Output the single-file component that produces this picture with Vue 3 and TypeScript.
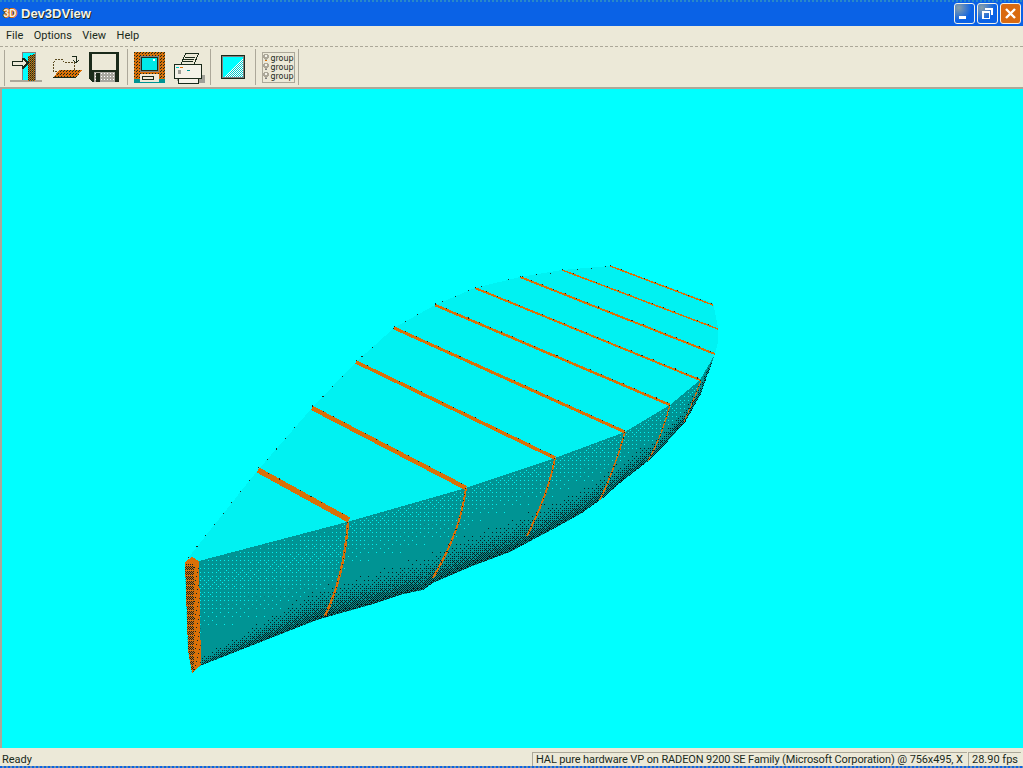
<script setup lang="ts">
type P = [number, number]
const topEdge: P[] = [[199,561],[347,522],[466,488],[555,458],[625,432],[670,405],[700,380],[715,354]]
const botEdge: P[] = [[200,666],[317,620],[370,605],[400,595],[423,590],[433,583],[470,567],[510,552],[557,527],[582,513],[603,498],[620,483],[647,462],[667,442],[685,422],[700,395],[715,354]]
const bayer = [
  [0,32,8,40,2,34,10,42],[48,16,56,24,50,18,58,26],[12,44,4,36,14,46,6,38],[60,28,52,20,62,30,54,22],
  [3,35,11,43,1,33,9,41],[51,19,59,27,49,17,57,25],[15,47,7,39,13,45,5,37],[63,31,55,23,61,29,53,21]
]
function at(line: P[], x: number): number {
  for (let i = 0; i < line.length - 1; i++) {
    const [a, b] = line[i], [c, d] = line[i + 1]
    if (x >= a && x <= c) return b + ((x - a) / (c - a)) * (d - b)
  }
  return line[line.length - 1][1]
}
function bandAt(x: number): number {
  if (x < 320) return 10 + (x - 200) * 0.22
  if (x < 500) return 36
  return Math.max(14, 36 - (x - 500) * 0.1)
}
let dark = ''
let light = ''
for (let x = 200; x < 714; x++) {
  const t = Math.ceil(at(topEdge, x)) + 1
  const b = Math.floor(at(botEdge, x))
  const reach = x < 340 ? 72 : x < 470 ? 45 : 36
  for (let y = t; y < b; y++) {
    const fromBottom = b - y
    const darkAmt = Math.max(0, 1 - fromBottom / bandAt(x))
    const th = bayer[y % 8][x % 8] / 64
    if (Math.pow(darkAmt, 2) * 0.7 > th + 0.004) {
      dark += `M${x} ${y}h1v1h-1z`
    } else {
      const depth = y - t
      const lightAmt = x < 340
        ? 0.085 * Math.max(0, 1 - Math.abs(depth - 24) / 48)
        : 0.09 * Math.max(0, 1 - depth / reach)
      if (lightAmt > th + 0.001) light += `M${x} ${y}h1v1h-1z`
    }
  }
}
let stern = ''
for (let y = 562; y < 672; y++) {
  for (let x = 185; x < 201; x++) {
    const on = x < 194 ? (x + y) % 2 === 0 && y % 5 !== 0 : (x * 3 + y * 5) % 17 === 0
    if (on) stern += `M${x} ${y}h1v1h-1z`
  }
}
const hullPoints = [...topEdge, ...[...botEdge].reverse()].map((p) => p.join(',')).join(' ')
const deckPoints =
  '199,561 188,558 258,470 312,408 356,362 394,328 435,305 475,288 520,277 562,270 610,266 713,303 718,327 718,342 715,354 700,380 670,405 625,432 555,458 466,488 347,522'
const deckFrames = [
  { d: 'M258 470L349 520', w: 5.5 },
  { d: 'M312 408L466 488', w: 4.5 },
  { d: 'M356 362L555 458', w: 3.5 },
  { d: 'M394 328L625 432', w: 3 },
  { d: 'M435 305L670 405', w: 2.5 },
  { d: 'M475 288L700 380', w: 2 },
  { d: 'M520 277L715 354', w: 2 },
  { d: 'M562 270L718 329', w: 1.5 },
  { d: 'M610 266L713 305', w: 1.5 }
]
const hullFrames = [
  { d: 'M348 522C346 550 340 585 325 616', w: 2.4 },
  { d: 'M466 488C462 515 455 540 433 578', w: 2 },
  { d: 'M555 458C552 475 545 500 527 536', w: 1.8 },
  { d: 'M625 432C620 450 612 475 600 500', w: 1.5 },
  { d: 'M670 405C666 420 660 440 648 461', w: 1.2 },
  { d: 'M701 380C696 395 690 408 684 422', w: 1 }
]
</script>

<template>
  <div class="window">
    <header class="titlebar">
      <span class="app-icon">3D</span>
      <span class="title">Dev3DView</span>
      <div class="caption-buttons">
        <button class="cap"><span class="min-glyph"></span></button>
        <button class="cap">
          <svg width="13" height="13" viewBox="0 0 13 13" shape-rendering="crispEdges">
            <path d="M4 1h8v7h-2V3H4z" fill="#fff" /><path d="M1 4h8v8H1zM2.500 6v4.500h5V6z" fill="#fff" fill-rule="evenodd" />
          </svg>
        </button>
        <button class="cap close">
          <svg width="13" height="13" viewBox="0 0 13 13"><path d="M2 2l9 9M11 2l-9 9" stroke="#fff" stroke-width="2.400" /></svg>
        </button>
      </div>
    </header>

    <nav class="menubar">
      <span>File</span><span>Options</span><span>View</span><span>Help</span>
    </nav>

    <div class="toolbar">
      <div class="tool door">
        <svg width="34" height="32" viewBox="0 0 34 32" shape-rendering="crispEdges">
          <defs>
            <pattern id="orangeDots" width="3" height="3" patternUnits="userSpaceOnUse">
              <rect width="3" height="3" fill="#d97008" /><rect width="1" height="1" fill="#1a2a1a" /><rect x="2" y="1" width="1" height="1" fill="#1a2a1a" />
            </pattern>
            <pattern id="mixDots" width="2" height="2" patternUnits="userSpaceOnUse">
              <rect width="2" height="2" fill="#d97008" /><rect width="1" height="1" fill="#1a2a1a" /><rect x="1" y="1" width="1" height="1" fill="#1a5a4a" />
            </pattern>
            <pattern id="cyanDots" width="2" height="2" patternUnits="userSpaceOnUse">
              <rect width="2" height="2" fill="#fff" /><rect width="1" height="1" fill="#00c8c8" /><rect x="1" y="1" width="1" height="1" fill="#00c8c8" />
            </pattern>
            <pattern id="greyDots" width="3" height="3" patternUnits="userSpaceOnUse">
              <rect width="3" height="3" fill="#a8a8a0" /><rect width="1" height="1" fill="#fff" />
            </pattern>
          </defs>
          <rect x="0" y="29" width="32" height="2" fill="#aca899" />
          <rect x="12" y="1" width="14" height="28" fill="#808080" />
          <rect x="13" y="2" width="12" height="27" fill="#00ffff" />
          <path d="M18 5l7-2v27h-7z" fill="url(#mixDots)" />
          <path d="M2 10h10V7h2l5 5-5 6h-2v-3H2z" fill="#1a2a1a" />
          <path d="M3 11h10V9l3 3-3 4v-2H3z" fill="#ece9d8" />
        </svg>
      </div>
      <div class="tool folder">
        <svg width="30" height="24" viewBox="0 0 30 24" shape-rendering="crispEdges">
          <path d="M1.500 7.500l2-3h7l2 3h10v9h-21z" fill="#ece9d8" stroke="#5a4a20" stroke-dasharray="2 1" />
          <path d="M7 15h23l-6 8H1z" fill="url(#orangeDots)" />
          <path d="M1 22h23v1H1z" fill="#1a2a1a" />
          <path d="M20 1h4v6M21 5l3 3 3-3" fill="none" stroke="#1a2a1a" />
        </svg>
      </div>
      <div class="tool floppy">
        <svg width="30" height="30" viewBox="0 0 30 30" shape-rendering="crispEdges">
          <path d="M0 0h30v30H4l-4-3z" fill="#1a2a1a" />
          <rect x="3" y="2" width="24" height="16" fill="#ece9d8" />
          <rect x="5" y="20" width="21" height="10" fill="url(#greyDots)" />
          <rect x="7" y="21" width="4" height="9" fill="#1a2a1a" />
        </svg>
      </div>
      <i class="sep sep-a"></i>
      <div class="tool computer">
        <svg width="31" height="31" viewBox="0 0 31 31" shape-rendering="crispEdges">
          <rect width="31" height="31" fill="url(#orangeDots)" />
          <rect y="27" width="31" height="4" fill="#009494" />
          <rect x="6" y="4" width="19" height="16" fill="#808080" />
          <rect x="7" y="5" width="17" height="14" fill="#1a2a1a" />
          <rect x="8" y="6" width="15" height="12" fill="#00e8e8" />
          <rect x="19" y="7" width="2" height="2" fill="#fff" />
          <rect x="6" y="22" width="19" height="8" fill="#ece9d8" />
          <rect x="8" y="24" width="12" height="4" fill="#1a2a1a" />
          <rect x="9" y="25" width="10" height="2" fill="#ece9d8" />
        </svg>
      </div>
      <div class="tool printer">
        <svg width="32" height="33" viewBox="0 0 32 33" shape-rendering="crispEdges">
          <path d="M3 24h29v8H5z" fill="#a0a098" />
          <path d="M8 13l5-11h13l-5 11z" fill="#ece9d8" stroke="#1a2a1a" />
          <path d="M12 6h10M11 8h10M10 10h10" stroke="#1a2a1a" />
          <rect x="1" y="13" width="27" height="14" fill="#f4f2e8" stroke="#1a2a1a" />
          <rect x="3" y="16" width="3" height="1" fill="#00c8c8" />
          <rect x="7" y="16" width="3" height="1" fill="#d97008" />
          <rect x="5" y="19" width="3" height="4" fill="#a0a098" />
          <rect x="14" y="19" width="3" height="1" fill="#009494" />
          <rect x="5" y="27" width="20" height="5" fill="#f4f2e8" stroke="#1a2a1a" />
        </svg>
      </div>
      <i class="sep sep-b"></i>
      <div class="tool colour">
        <svg width="24" height="24" viewBox="0 0 24 24" shape-rendering="crispEdges">
          <rect width="24" height="24" fill="#1a2a1a" />
          <rect x="1" y="1" width="22" height="22" fill="#808080" />
          <rect x="2" y="2" width="20" height="20" fill="#00ffff" />
          <path d="M22 3v19H3z" fill="url(#cyanDots)" />
        </svg>
      </div>
      <i class="sep sep-c"></i>
      <div class="tool groups">
        <div v-for="n in 3" :key="n" class="group-row">
          <svg width="6" height="8" viewBox="0 0 6 8" shape-rendering="crispEdges">
            <path d="M1 0h4v1h1v3H5v1H4v2H2V5H1V4H0V1h1z" fill="#aca899" />
            <path d="M2 1h2v2H2z" fill="#f4f2e8" />
            <path d="M2 6h2v1H2z" :fill="n === 1 ? '#d97008' : '#808080'" />
          </svg>
          <span>group</span>
        </div>
      </div>
      <i class="sep sep-d"></i>
    </div>

    <main class="viewport">
      <svg class="scene" width="1021" height="659" viewBox="2 89 1021 659" shape-rendering="crispEdges">
        <polygon :points="deckPoints" fill="#00f2f2" />
        <polygon :points="hullPoints" fill="#009494" />
        <path :d="light" fill="#00f0f0" />
        <path :d="dark" fill="#0a1e1e" />
        <path d="M188 558L258 470L312 408L356 362L394 328L435 305L475 288L520 277L610 266" fill="none" stroke="#1a2a1a" stroke-width="1" stroke-dasharray="1 13" />
        <path v-for="(f, i) in deckFrames" :key="i" :d="f.d" fill="none" stroke="#d97008" :stroke-width="f.w" />
        <path v-for="(f, i) in deckFrames" :key="'k' + i" :d="f.d" fill="none" stroke="#1a2a1a" stroke-width="1" stroke-dasharray="1 11" :transform="`translate(0,-${f.w / 2})`" />
        <path v-for="(f, i) in hullFrames" :key="'h' + i" :d="f.d" fill="none" stroke="#d97008" :stroke-width="f.w" />
        <path v-for="(f, i) in hullFrames" :key="'d' + i" :d="f.d" fill="none" stroke="#1a2a1a" stroke-width="1" stroke-dasharray="1 5" />
        <polygon points="185,562 192,557 199,561 201,665 192,673 188,650" fill="#d97008" />
        <clipPath id="sternClip"><polygon points="185,564 199,564 201,665 192,673 188,650" /></clipPath>
        <path :d="stern" fill="#0d2a2a" clip-path="url(#sternClip)" />
      </svg>
    </main>

    <footer class="statusbar">
      <span class="ready">Ready</span>
      <span class="panel info">HAL pure hardware VP on RADEON 9200 SE Family (Microsoft Corporation) @ 756x495, X</span>
      <span class="panel fps">28.90 fps</span>
    </footer>
  </div>
</template>

<style scoped>
.window {
  width: 1023px;
  height: 768px;
  display: flex;
  flex-direction: column;
  overflow: hidden;
  background: #ece9d8;
  font-family: Roboto, "Liberation Sans", sans-serif;
  font-size: 11px;
  color: #1a2a1a;
}
.titlebar {
  height: 26px;
  flex: none;
  display: flex;
  align-items: center;
  padding-left: 2px;
  box-sizing: border-box;
  background:
    repeating-linear-gradient(90deg, #2a88c8 0 2px, #0a62e6 2px 4px) top / 100% 2px no-repeat,
    #0a62e6;
  color: #f4f2e8;
}
.app-icon {
  width: 16px;
  text-align: center;
  font: bold 10px "Liberation Sans", sans-serif;
  color: #f4f2e8;
  text-shadow: 1px 0 #d97008, -1px 0 #d97008, 0 1px #d97008, 0 -1px #d97008;
}
.title {
  margin-left: 3px;
  font: bold 13px "Liberation Sans", sans-serif;
  text-shadow: 1px 1px #1a2a1a;
}
.caption-buttons {
  margin-left: auto;
  margin-right: 2px;
  display: flex;
  gap: 2px;
}
.cap {
  width: 21px;
  height: 21px;
  padding: 0;
  border: 1px solid #f4f2e8;
  border-radius: 3px;
  display: flex;
  align-items: center;
  justify-content: center;
  background:
    radial-gradient(circle at 20% 20%, #8aa0a8, transparent 60%),
    #0a62e6;
}
.close {
  background: #d96a10;
}
.min-glyph {
  width: 7px;
  height: 3px;
  margin: 8px 5px 0 0;
  background: #fff;
}
.menubar {
  height: 20px;
  flex: none;
  box-sizing: border-box;
  display: flex;
  align-items: center;
  gap: 10.500px;
  padding: 0 0 2px 6px;
  font-size: 11px;
}
.toolbar {
  height: 43px;
  flex: none;
  display: flex;
  align-items: center;
  box-sizing: border-box;
  padding-left: 4px;
  border-top: 1px dashed #aca899;
  border-bottom: 2px solid #aca899;
  background: linear-gradient(90deg, #aca899 0 1px, transparent 1px) no-repeat 4px 3px / 1px 36px;
}
.tool {
  flex: none;
  display: flex;
  align-items: center;
  justify-content: center;
}
.door { margin-left: 6px; width: 34px; }
.folder { margin-left: 8px; width: 30px; }
.floppy { margin-left: 7px; width: 30px; }
.computer { margin-left: 6px; width: 31px; }
.printer { margin-left: 8px; width: 32px; }
.colour { margin-left: 10px; width: 24px; }
.groups {
  margin-left: 6px;
  width: 33px;
  height: 31px;
  box-sizing: border-box;
  border: 1px solid #aca899;
  display: flex;
  flex-direction: column;
  justify-content: center;
  font: 8px/9px "DejaVu Sans", sans-serif;
}
.group-row {
  display: flex;
  align-items: center;
  gap: 1px;
}
.sep {
  flex: none;
  width: 1px;
  height: 36px;
  background: #aca899;
}
.sep-a { margin-left: 8px; }
.sep-b { margin-left: 5px; }
.sep-c { margin-left: 10px; }
.sep-d { margin-left: 3px; }
.viewport {
  flex: 1;
  min-height: 0;
  padding-left: 2px;
  background: #aca899;
}
.scene {
  display: block;
  background: #00ffff;
}
.statusbar {
  height: 20px;
  flex: none;
  box-sizing: border-box;
  display: flex;
  gap: 1px;
  padding: 4px 2px 2px 2px;
  line-height: 14px;
  background:
    repeating-linear-gradient(90deg, #0a62e6 0 2px, #6a90b0 2px 4px) bottom / 100% 2px no-repeat,
    #ece9d8;
}
.ready {
  flex: 1;
  padding-top: 1px;
}
.panel {
  flex: none;
  box-sizing: border-box;
  height: 14px;
  padding-left: 3px;
  border-left: 1px solid #aca899;
  border-top: 1px solid #aca899;
  white-space: nowrap;
  overflow: hidden;
  line-height: 14px;
}
.info { width: 435px; letter-spacing: -0.120px; }
.fps { width: 53px; }
</style>
